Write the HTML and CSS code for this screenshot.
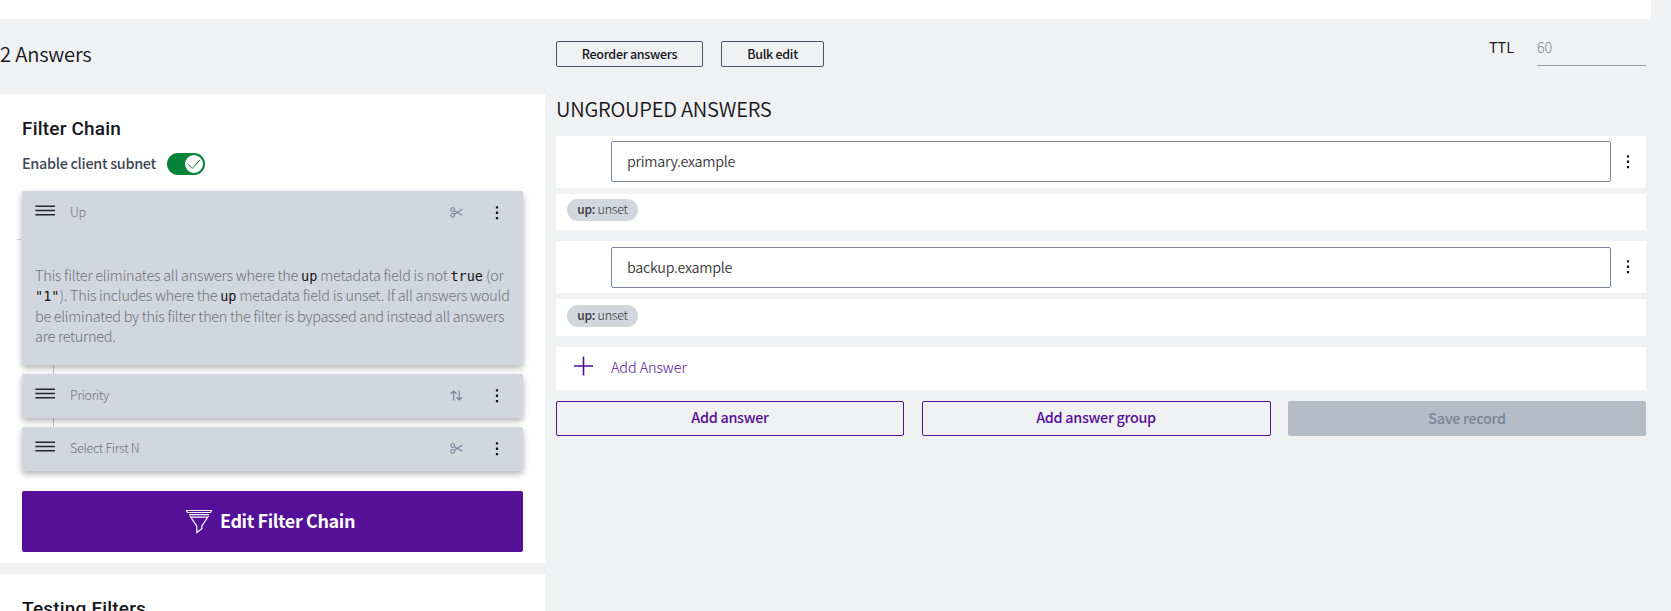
FILE: index.html
```html
<!DOCTYPE html>
<html lang="en">
<head>
<meta charset="utf-8">
<title>Answers</title>
<link rel="stylesheet" href="styles.css">
</head>
<body>
<svg class="defs" width="0" height="0">
  <symbol id="grip" viewBox="0 0 20 12"><path d="M.4 1.3h19.6M.4 5.5h19.6M.4 9.7h19.6" fill="none" stroke="#26242e" stroke-width="1.5"/></symbol>
  <symbol id="dots" viewBox="0 0 4 14"><path d="M.9 .2h2.2v2.3H.9zM.9 5.6h2.2v2.3H.9zM.9 11h2.2v2.3H.9z" fill="#16161a"/></symbol>
  <symbol id="scissors" viewBox="0 0 13 11"><g fill="none" stroke="#78849b" stroke-width="1.1"><circle cx="2.7" cy="2.6" r="1.9"/><circle cx="2.7" cy="8.4" r="1.9"/><path d="M4.3 3.7l8 4.6M4.3 7.3l8-5"/></g></symbol>
  <symbol id="swap" viewBox="0 0 13 11"><path d="M3.7 10.5V1M.8 3.8L3.7 1l2.9 2.8M9.2.5V10M6.4 7.2L9.2 10l3-2.8" fill="none" stroke="#78849b" stroke-width="1.2"/></symbol>
</svg>
<div class="topbar"></div>
<div class="page">
  <aside class="side">
    <h2 class="count">2 Answers</h2>
    <section class="panel">
      <h3 class="title">Filter Chain</h3>
      <div class="subnet"><span>Enable client subnet</span>
        <span class="toggle"><svg width="18" height="18" viewBox="0 0 18 18"><circle cx="9" cy="9" r="9" fill="#fff"/><path d="M3.2 9.3l4 4.2L15 5" fill="none" stroke="#048438" stroke-width="1"/></svg></span>
      </div>
      <div class="chain">
        <article class="filter open">
          <header><svg class="grip"><use href="#grip"/></svg><span class="name">Up</span><svg class="kind"><use href="#scissors"/></svg><svg class="dots"><use href="#dots"/></svg></header>
          <p>This filter eliminates all answers where the <code>up</code> metadata field is not <code>true</code> (or<br><code>"1"</code>). This includes where the <code>up</code> metadata field is unset. If all answers would<br><span class="tight">be eliminated by this filter then the filter is bypassed and instead all answers</span><br>are returned.</p>
        </article>
        <article class="filter">
          <header><svg class="grip"><use href="#grip"/></svg><span class="name">Priority</span><svg class="kind"><use href="#swap"/></svg><svg class="dots"><use href="#dots"/></svg></header>
        </article>
        <article class="filter">
          <header><svg class="grip"><use href="#grip"/></svg><span class="name">Select First N</span><svg class="kind"><use href="#scissors"/></svg><svg class="dots"><use href="#dots"/></svg></header>
        </article>
      </div>
      <button class="edit"><svg width="28" height="25" viewBox="0 0 28 25"><path d="M1.5 1.5h25l-.9 2H2.4zM4 5.6h20M5.3 8.2h17.4M5 7l6.8 10.2v6.3l5-3.8v-2.5L23.5 7" fill="none" stroke="#fff" stroke-width="1.2"/></svg><span>Edit Filter Chain</span></button>
    </section>
    <section class="panel next"><h3 class="title">Testing Filters</h3></section>
  </aside>
  <main class="main">
    <div class="tools">
      <button class="small reorder">Reorder answers</button>
      <button class="small bulk">Bulk edit</button>
      <label class="ttl"><span>TTL</span><span class="ttl-value">60</span></label>
    </div>
    <h2 class="group">UNGROUPED ANSWERS</h2>
    <div class="answer"><div class="field">primary.example</div><svg class="dots"><use href="#dots"/></svg></div>
    <div class="meta"><span class="pill"><b>up:</b> unset</span></div>
    <div class="answer second"><div class="field">backup.example</div><svg class="dots"><use href="#dots"/></svg></div>
    <div class="meta tall"><span class="pill"><b>up:</b> unset</span></div>
    <div class="add"><svg width="20" height="20" viewBox="0 0 20 20"><path d="M0 10h19M9.5 .5v19" stroke="#520f96" stroke-width="1.6"/></svg><span>Add Answer</span></div>
    <div class="actions">
      <button class="outline">Add answer</button>
      <button class="outline">Add answer group</button>
      <button class="save">Save record</button>
    </div>
  </main>
</div>
</body>
</html>
```

FILE: styles.css
```css
* { box-sizing: border-box; }
body { margin: 0; height: 611px; overflow: hidden; background: #f0f1f3; color: #16161a; font-family: "Noto Sans CJK SC", "Noto Sans", sans-serif; font-size: 14.4px; font-weight: 300; }
h2, h3, p { margin: 0; }
button { font-family: inherit; padding: 0; margin: 0; }
svg { display: block; flex: none; }
.defs { position: absolute; }
.topbar { width: 1651px; height: 19px; background: #fff; }
.page { display: flex; gap: 11px; }
.side { width: 545px; }
.count { height: 75px; font-size: 20.2px; font-weight: 350; line-height: 70px; letter-spacing: -.2px; white-space: nowrap; }
.panel { height: 469px; padding: 0 22px; background: #fff; }
.panel.next { height: 60px; margin-top: 11px; }
.title { font-family: Roboto, sans-serif; font-size: 19px; font-weight: 500; line-height: 24px; letter-spacing: .2px; padding-top: 23px; height: 57px; }
.subnet { display: flex; align-items: center; gap: 11px; height: 26px; color: #3f4656; font-weight: 500; line-height: 24px; letter-spacing: -.31px; }
.subnet > span:first-child { padding-bottom: 2px; }
.toggle { width: 38px; height: 22px; border-radius: 11px; background: #048438; padding: 2px; display: flex; justify-content: flex-end; }
.chain { margin-top: 14px; display: flex; flex-direction: column; gap: 9px; background: linear-gradient(#c2c4c8, #c2c4c8) 31px 0 / 1px 100% no-repeat; }
.filter { height: 44px; border-radius: 2px; background: #d2d6de; box-shadow: 0 3px 6px rgba(0,0,0,.3); color: #6f7278; }
.filter.open { position: relative; height: 174px; }
.filter.open::before { content: ""; position: absolute; left: -5px; top: 48px; width: 5px; height: 1px; background: #c2c4c8; }
.filter header { display: flex; align-items: center; height: 44px; padding: 0 24px 0 13px; }
.grip { width: 20px; height: 12px; margin-right: 15px; margin-top: -4px; }
.name { flex: 1; font-size: 12.6px; line-height: 20px; letter-spacing: -.3px; margin-top: -2px; }
.kind { width: 13px; height: 11px; margin: -1px 32px 0 0; }
.dots { width: 4px; height: 14px; margin-top: -1px; }
.filter p { padding: 30px 0 0 13px; line-height: 20.4px; letter-spacing: -.23px; white-space: nowrap; }
.tight { letter-spacing: -.26px; }
code { font-family: "DejaVu Sans Mono", monospace; font-size: 13.5px; line-height: 1; letter-spacing: 0; color: #16161a; }
.edit { display: flex; align-items: center; justify-content: center; gap: 7px; width: 501px; height: 61px; margin-top: 20px; padding-right: 5px; border: 0; border-radius: 2px; background: #541097; color: #fff; font-size: 18px; font-weight: 700; letter-spacing: -.4px; }
.edit span { padding-bottom: 3px; }
.main { width: 1090px; }
.tools { display: flex; height: 75px; padding-top: 22px; align-items: flex-start; }
.small { height: 26px; border: 1px solid #4c5467; border-radius: 2px; background: none; color: #16161a; font-size: 12.5px; font-weight: 500; line-height: 22px; letter-spacing: -.3px; padding-bottom: 1px; }
.reorder { width: 147px; margin-right: 18px; }
.bulk { width: 103px; }
.ttl { display: flex; gap: 23px; margin-left: auto; height: 25px; line-height: 12px; }
.ttl > span:first-child { font-weight: 400; }
.ttl-value { width: 109px; color: #80848c; border-bottom: 1px solid #9a9fb0; letter-spacing: -.3px; }
.group { height: 42px; font-size: 20.2px; font-weight: 350; line-height: 30px; letter-spacing: -.25px; white-space: nowrap; }
.answer { display: flex; align-items: center; justify-content: space-between; height: 52px; padding: 0 16px 0 55px; background: #fff; }
.field { width: 1000px; height: 41px; margin-top: -1px; padding-left: 15px; border: 1px solid #7c879d; border-radius: 2px; color: #393939; font-weight: 350; line-height: 38px; letter-spacing: -.3px; }
.second .field { margin-top: 1px; }
.meta { height: 36px; margin-top: 6px; padding: 5px 11px; background: #fff; }
.meta.tall { height: 37px; padding-top: 6px; }
.pill { display: block; width: 71px; height: 22px; border-radius: 11px; background: #d2d6de; color: #393939; font-size: 12.6px; line-height: 20px; letter-spacing: -.3px; text-align: center; }
.pill b { font-weight: 500; font-size: 12px; }
.answer.second { margin-top: 11px; }
.add { display: flex; align-items: flex-start; gap: 17px; height: 43px; margin-top: 11px; padding: 9px 0 0 18px; background: #fff; color: #541097; line-height: 22px; letter-spacing: -.1px; }
.actions { display: grid; grid-template-columns: 348px 349px 358px; justify-content: space-between; height: 35px; margin-top: 11px; }
.outline, .save { border: 1px solid #541097; border-radius: 2px; background: none; color: #541097; font-size: 14.4px; font-weight: 500; line-height: 28px; letter-spacing: -.3px; padding-bottom: 4px; }
.save { border: 0; background: #b5bbc7; color: #78849b; line-height: 32px; padding-bottom: 2px; }
```
